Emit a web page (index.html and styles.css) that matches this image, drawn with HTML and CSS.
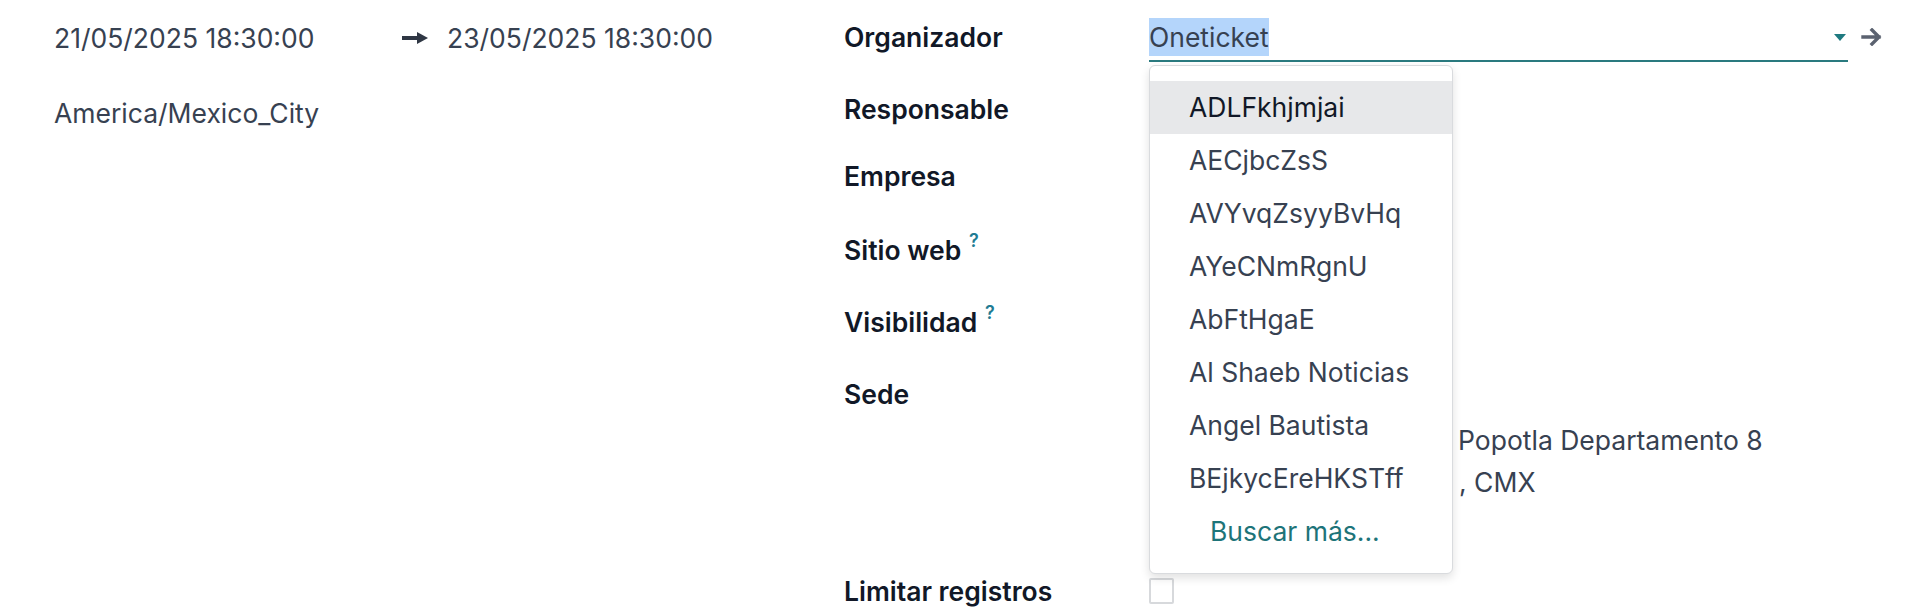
FILE: index.html
```html
<!DOCTYPE html>
<html>
<head>
<meta name="viewport" content="width=device-width, initial-scale=1.0">
<link rel="stylesheet" href="styles.css">
</head>
<body>

<div class="sheet">

  <div class="left-group">
    <div class="date-range">
      <span class="date">21/05/2025 18:30:00</span>
      <svg class="range-arrow" width="27" height="14" viewBox="0 0 27 14">
        <rect x="0" y="5" width="17" height="4" fill="#2f3744"/>
        <path d="M15 1 L26 7 L15 13 Z" fill="#2f3744"/>
      </svg>
      <span class="date">23/05/2025 18:30:00</span>
    </div>
    <div class="timezone">America/Mexico_City</div>
  </div>

  <div class="right-group">

    <div class="field-row row-org">
      <div class="label">Organizador</div>
      <div class="value">
        <div class="m2o-input">
          <span class="m2o-text"><span class="selected">Oneticket</span></span>
          <span class="caret"></span>
        </div>
        <svg class="open-record" width="22" height="18" viewBox="0 0 22 18">
          <path d="M2 9 H18 M11 2 L18 9 L11 16" fill="none" stroke="#5b6270" stroke-width="3.4" stroke-linecap="square"/>
        </svg>

        <!-- autocomplete dropdown over the next rows -->
        <ul class="ac-dropdown">
          <li class="ac-item ac-active">ADLFkhjmjai</li>
          <li class="ac-item">AECjbcZsS</li>
          <li class="ac-item">AVYvqZsyyBvHq</li>
          <li class="ac-item">AYeCNmRgnU</li>
          <li class="ac-item">AbFtHgaE</li>
          <li class="ac-item">Al Shaeb Noticias</li>
          <li class="ac-item">Angel Bautista</li>
          <li class="ac-item">BEjkycEreHKSTff</li>
          <li class="ac-item ac-more">Buscar más...</li>
        </ul>
      </div>
    </div>

    <div class="field-row row-resp">
      <div class="label">Responsable</div>
      <div class="value"></div>
    </div>

    <div class="field-row row-emp">
      <div class="label">Empresa</div>
      <div class="value"></div>
    </div>

    <div class="field-row">
      <div class="label">Sitio web <sup class="help">?</sup></div>
      <div class="value"></div>
    </div>

    <div class="field-row">
      <div class="label">Visibilidad <sup class="help">?</sup></div>
      <div class="value"></div>
    </div>

    <div class="field-row row-sede">
      <div class="label">Sede</div>
      <div class="value address">
        <div class="addr-line addr-street">Popotla Departamento 8</div>
        <div class="addr-line addr-city">, CMX</div>
      </div>
    </div>

    <div class="field-row row-limit">
      <div class="label">Limitar registros</div>
      <div class="value"><span class="checkbox"></span></div>
    </div>

  </div>
</div>

</body>
</html>
```

FILE: styles.css
```css
* {
  box-sizing: border-box;
}

body {
  margin: 0;
  background: #ffffff;
  font: 26.5px "Inter", "Noto Sans", sans-serif;
  color: #374151;
}

.sheet {
  display: flex;
  height: 613px;
  overflow: hidden;
}

/* left column: dates and timezone */
.left-group {
  width: 844px;
  padding: 15px 0 0 54px;
}

.date-range {
  display: flex;
  align-items: center;
  height: 46px;
}

.date {
  width: 348px;
}

.date-range .date + .date {
  width: auto;
}

.range-arrow {
  margin-right: 18px;
}

.timezone {
  margin-top: 29px;
  line-height: 46px;
}

/* right column: form fields */
.right-group {
  width: 1076px;
  padding-top: 14px;
}

.field-row {
  display: flex;
  height: 72px;
  line-height: 46px;
}

.row-resp {
  height: 67px;
}

.row-emp {
  height: 74px;
}

.row-sede {
  height: 197px;
}

.label {
  width: 305px;
  font-weight: 600;
  color: #111827;
}

.help {
  font-size: 18px;
  font-weight: 600;
  color: #217b93;
  vertical-align: top;
  line-height: 28px;
  margin-left: 1px;
}

.value {
  position: relative;
  flex: 1;
  display: flex;
  align-items: flex-start;
}

.m2o-input {
  display: flex;
  align-items: center;
  width: 699px;
  height: 48px;
  border-bottom: 2px solid #2a7a7f;
}

.m2o-text {
  flex: 1;
}

.selected {
  background: #b4d5fb;
  display: inline-block;
  line-height: 38px;
}

.caret {
  width: 0;
  height: 0;
  border-left: 6px solid transparent;
  border-right: 6px solid transparent;
  border-top: 7px solid #1f7a80;
  margin-right: 2px;
}

.open-record {
  margin: 14px 0 0 13px;
}

/*the dropdown lies over the rows below:*/
.ac-dropdown {
  position: absolute;
  top: 51px;
  left: 0;
  width: 304px;
  height: 509px;
  margin: 0;
  padding: 15px 0 0 0;
  list-style: none;
  background: #ffffff;
  border: 1px solid #d9dbde;
  border-radius: 6px;
  box-shadow: 0 4px 10px rgba(0, 0, 0, 0.12);
  z-index: 10;
}

.ac-item {
  height: 53px;
  line-height: 53px;
  padding-left: 39px;
  white-space: nowrap;
}

.ac-active {
  background: #e7e8ea;
  color: #111827;
}

.ac-more {
  padding-left: 60px;
  color: #1d7479;
}

/* address lines, partly under the dropdown */
.address {
  flex-direction: column;
  padding-top: 48px;
}

.addr-line {
  line-height: 42px;
  white-space: nowrap;
}

.addr-street {
  padding-left: 309px;
}

.addr-city {
  padding-left: 310px;
}

.row-limit .value {
  align-items: center;
  height: 46px;
}

.checkbox {
  display: inline-block;
  width: 25px;
  height: 26px;
  border: 2px solid #d7d9dc;
  border-radius: 2px;
}
```
